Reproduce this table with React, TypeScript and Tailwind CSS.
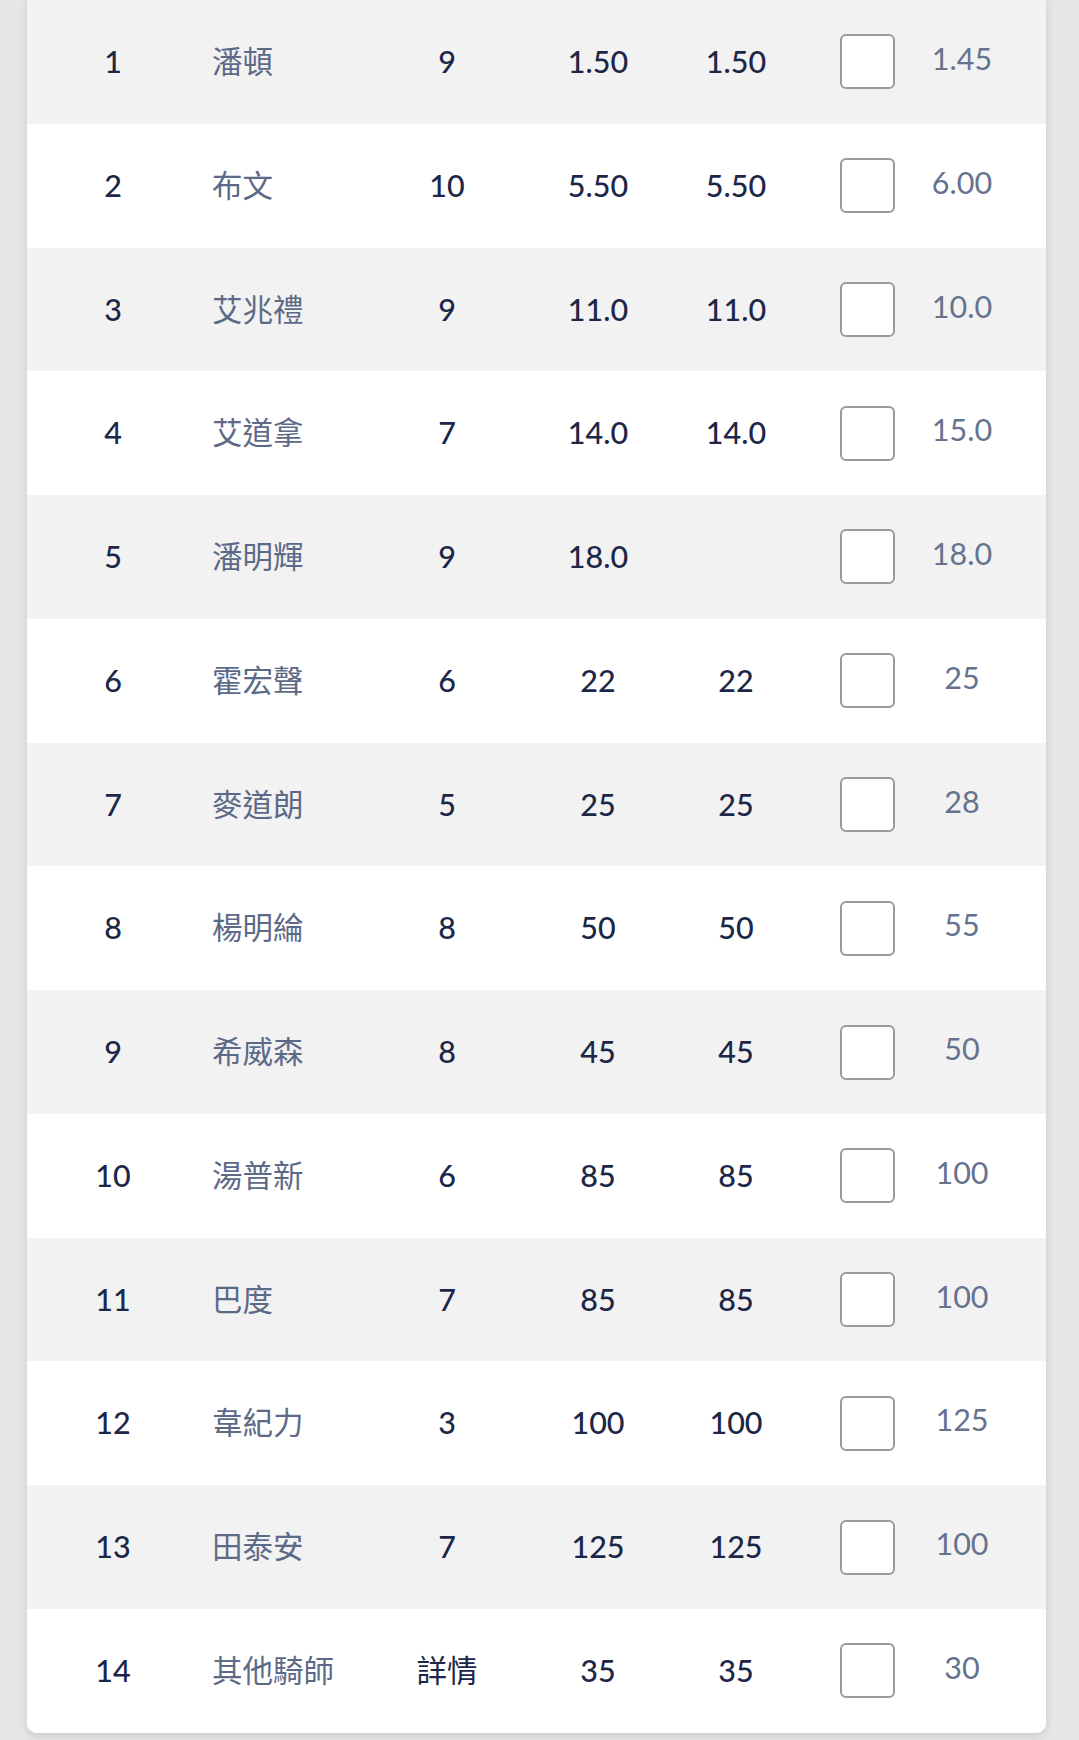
const rows = [
  { no: 1, name: "潘頓", w: "9", a: "1.50", b: "1.50", c: "1.45" },
  { no: 2, name: "布文", w: "10", a: "5.50", b: "5.50", c: "6.00" },
  { no: 3, name: "艾兆禮", w: "9", a: "11.0", b: "11.0", c: "10.0" },
  { no: 4, name: "艾道拿", w: "7", a: "14.0", b: "14.0", c: "15.0" },
  { no: 5, name: "潘明輝", w: "9", a: "18.0", b: "", c: "18.0" },
  { no: 6, name: "霍宏聲", w: "6", a: "22", b: "22", c: "25" },
  { no: 7, name: "麥道朗", w: "5", a: "25", b: "25", c: "28" },
  { no: 8, name: "楊明綸", w: "8", a: "50", b: "50", c: "55" },
  { no: 9, name: "希威森", w: "8", a: "45", b: "45", c: "50" },
  { no: 10, name: "湯普新", w: "6", a: "85", b: "85", c: "100" },
  { no: 11, name: "巴度", w: "7", a: "85", b: "85", c: "100" },
  { no: 12, name: "韋紀力", w: "3", a: "100", b: "100", c: "125" },
  { no: 13, name: "田泰安", w: "7", a: "125", b: "125", c: "100" },
  { no: 14, name: "其他騎師", w: "詳情", a: "35", b: "35", c: "30" },
];

export default function App() {
  return (
    <div className="min-h-[1740px] bg-[#e6e6e6] pl-[27px] pr-[33px] font-['Lato','Noto_Sans_CJK_TC',sans-serif]">
      <div className="overflow-hidden rounded-b-[10px] bg-white shadow-[0_3px_8px_rgba(0,0,0,0.12)]">
        {rows.map((r) => (
          <div
            key={r.no}
            className={`grid h-[123.77px] grid-cols-[172px_180px_136px_166px_110px_128px_86px] items-center pr-[41px] text-[30.5px] ${
              r.no % 2 === 1 ? "bg-[#f2f2f2]" : "bg-white"
            }`}
          >
            <span className="text-center font-medium text-[#1c2747]">{r.no}</span>
            <span className="pl-[13px] text-[#5d6a87]">{r.name}</span>
            <span className={`text-center text-[#1c2747] ${r.no === 14 ? "font-normal" : "font-medium"}`}>{r.w}</span>
            <span className="text-center font-medium text-[#1c2747]">{r.a}</span>
            <span className="text-center font-medium text-[#1c2747]">{r.b}</span>
            <span className="flex justify-end pr-[24px]">
              <span className="h-[55px] w-[55px] rounded-[6px] border-2 border-[#9a9a9a] bg-white" />
            </span>
            <span className="pb-[6px] text-center text-[#66738f]">{r.c}</span>
          </div>
        ))}
      </div>
    </div>
  );
}
